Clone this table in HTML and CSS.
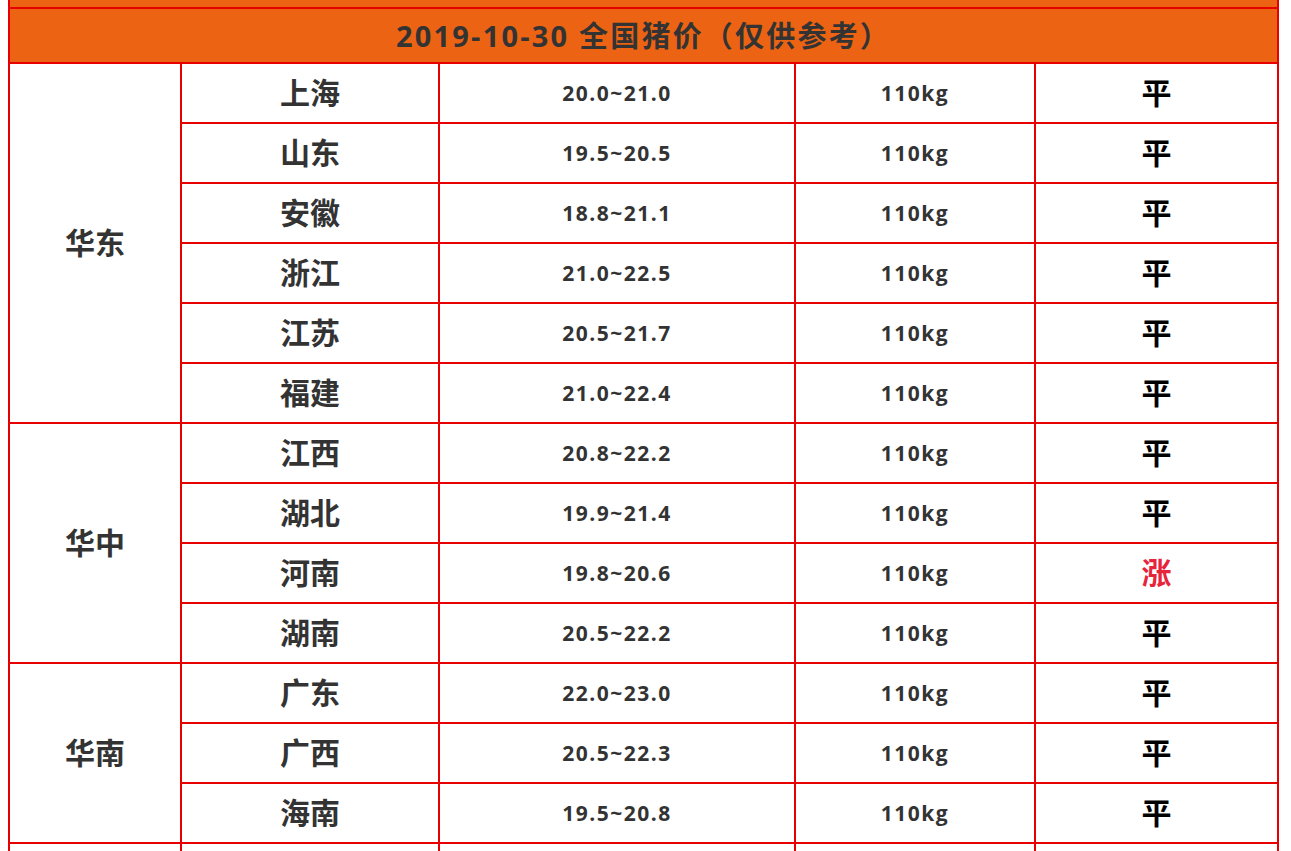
FILE: index.html
```html
<!DOCTYPE html>
<html lang="zh-CN">
<head>
<meta charset="utf-8">
<title>全国猪价</title>
<link rel="stylesheet" href="styles.css">
</head>
<body>
<table class="price-table">
  <colgroup>
    <col class="c-region">
    <col class="c-prov">
    <col class="c-price">
    <col class="c-weight">
    <col class="c-trend">
  </colgroup>
  <tbody>
    <tr class="strip"><td colspan="5"></td></tr>
    <tr class="head"><td colspan="5">2019-10-30 全国猪价（仅供参考）</td></tr>

    <tr><td class="region" rowspan="6">华东</td><td class="prov">上海</td><td class="num">20.0~21.0</td><td class="num">110kg</td><td class="trend">平</td></tr>
    <tr><td class="prov">山东</td><td class="num">19.5~20.5</td><td class="num">110kg</td><td class="trend">平</td></tr>
    <tr><td class="prov">安徽</td><td class="num">18.8~21.1</td><td class="num">110kg</td><td class="trend">平</td></tr>
    <tr><td class="prov">浙江</td><td class="num">21.0~22.5</td><td class="num">110kg</td><td class="trend">平</td></tr>
    <tr><td class="prov">江苏</td><td class="num">20.5~21.7</td><td class="num">110kg</td><td class="trend">平</td></tr>
    <tr><td class="prov">福建</td><td class="num">21.0~22.4</td><td class="num">110kg</td><td class="trend">平</td></tr>

    <tr><td class="region" rowspan="4">华中</td><td class="prov">江西</td><td class="num">20.8~22.2</td><td class="num">110kg</td><td class="trend">平</td></tr>
    <tr><td class="prov">湖北</td><td class="num">19.9~21.4</td><td class="num">110kg</td><td class="trend">平</td></tr>
    <tr><td class="prov">河南</td><td class="num">19.8~20.6</td><td class="num">110kg</td><td class="trend up">涨</td></tr>
    <tr><td class="prov">湖南</td><td class="num">20.5~22.2</td><td class="num">110kg</td><td class="trend">平</td></tr>

    <tr><td class="region" rowspan="3">华南</td><td class="prov">广东</td><td class="num">22.0~23.0</td><td class="num">110kg</td><td class="trend">平</td></tr>
    <tr><td class="prov">广西</td><td class="num">20.5~22.3</td><td class="num">110kg</td><td class="trend">平</td></tr>
    <tr><td class="prov">海南</td><td class="num">19.5~20.8</td><td class="num">110kg</td><td class="trend">平</td></tr>

    <tr><td class="region"></td><td class="prov"></td><td class="num"></td><td class="num"></td><td class="trend"></td></tr>
  </tbody>
</table>
</body>
</html>
```

FILE: styles.css
```css
html, body {
  background: #ffffff;
}
body {
  margin: 0 8px;
  font-family: "Open Sans", "Noto Sans CJK SC", sans-serif;
  font-weight: 700;
  color: #333333;
}
.price-table {
  border-collapse: collapse;
  table-layout: fixed;
  width: 1269px;
}
.c-region { width: 172px; }
.c-prov { width: 258px; }
.c-price { width: 356px; }
.c-weight { width: 240px; }
.c-trend { width: 243px; }

.price-table td {
  border: 2px solid #e60000;
  padding: 0;
  text-align: center;
  vertical-align: middle;
  height: 58px;
  line-height: 1;
}
.price-table tr.strip td {
  border-top: 0;
  height: 7px;
  background: #ec6413;
}
.price-table tr.head td {
  height: 53px;
  background: #ec6413;
  font-size: 29px;
  letter-spacing: 2.2px;
  color: #333333;
}
.region {
  font-size: 30px;
}
.prov {
  font-size: 30px;
}
.num {
  font-size: 21px;
  letter-spacing: 1.5px;
}
.trend {
  font-size: 30px;
  color: #000000;
}
.trend.up {
  color: #e8243a;
}
```
